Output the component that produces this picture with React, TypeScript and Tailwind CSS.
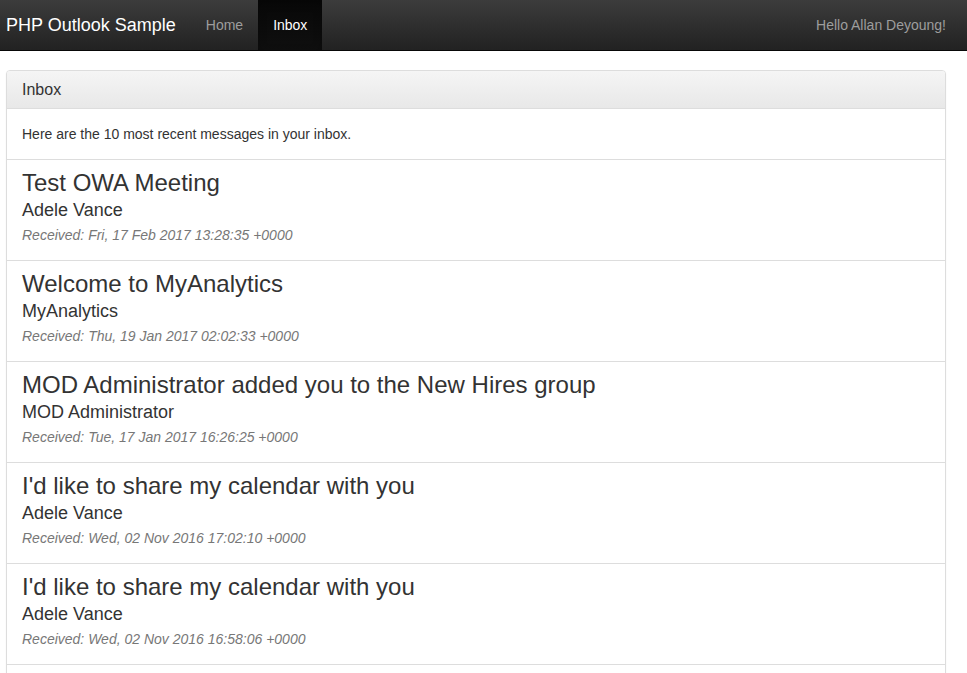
const messages = [
  {
    subject: "Test OWA Meeting",
    from: "Adele Vance",
    received: "Fri, 17 Feb 2017 13:28:35 +0000",
  },
  {
    subject: "Welcome to MyAnalytics",
    from: "MyAnalytics",
    received: "Thu, 19 Jan 2017 02:02:33 +0000",
  },
  {
    subject: "MOD Administrator added you to the New Hires group",
    from: "MOD Administrator",
    received: "Tue, 17 Jan 2017 16:26:25 +0000",
  },
  {
    subject: "I'd like to share my calendar with you",
    from: "Adele Vance",
    received: "Wed, 02 Nov 2016 17:02:10 +0000",
  },
  {
    subject: "I'd like to share my calendar with you",
    from: "Adele Vance",
    received: "Wed, 02 Nov 2016 16:58:06 +0000",
  },
  {
    subject: "I'd like to share my calendar with you",
    from: "Adele Vance",
    received: "Wed, 02 Nov 2016 16:50:12 +0000",
  },
];

export default function App() {
  return (
    <div className="h-[673px] overflow-hidden bg-white font-['Liberation_Sans',Arial,sans-serif] text-[14px] text-[#333]">
      {/* Navbar */}
      <nav className="flex h-[51px] items-stretch border-b border-[#080808] bg-gradient-to-b from-[#3c3c3c] to-[#222222]">
        <a className="flex items-center pl-[6px] pr-[15px] text-[18px] leading-[20px] text-white">
          PHP Outlook Sample
        </a>
        <a className="flex items-center px-[15px] leading-[20px] text-[#9d9d9d]">Home</a>
        <a className="flex items-center bg-gradient-to-b from-[#080808] to-[#0f0f0f] px-[15px] leading-[20px] text-white shadow-[inset_0_3px_9px_rgba(0,0,0,0.25)]">
          Inbox
        </a>
        <div className="ml-auto flex items-center pr-[21px] leading-[20px] text-[#9d9d9d]">
          Hello Allan Deyoung!
        </div>
      </nav>

      {/* Inbox panel */}
      <div className="ml-[6px] mt-[19px] w-[940px] rounded-[4px] border border-[#dddddd] bg-white shadow-[0_1px_2px_rgba(0,0,0,0.05)]">
        <div className="rounded-t-[3px] border-b border-[#dddddd] bg-gradient-to-b from-[#f5f5f5] to-[#e8e8e8] px-[15px] py-[10px] text-[16px] leading-[17px]">
          Inbox
        </div>
        <div className="p-[15px] leading-[20px]">
          Here are the 10 most recent messages in your inbox.
        </div>
        <div>
          {messages.map((m, i) => (
            <div key={i} className="border-t border-[#dddddd] px-[15px] pb-[15px] pt-[10px]">
              <h3 className="text-[24px] leading-[26px]">{m.subject}</h3>
              <h4 className="mt-[4px] text-[18px] leading-[20px]">{m.from}</h4>
              <p className="mt-[5px] italic leading-[20px] text-[#777777]">Received: {m.received}</p>
            </div>
          ))}
        </div>
      </div>
    </div>
  );
}
